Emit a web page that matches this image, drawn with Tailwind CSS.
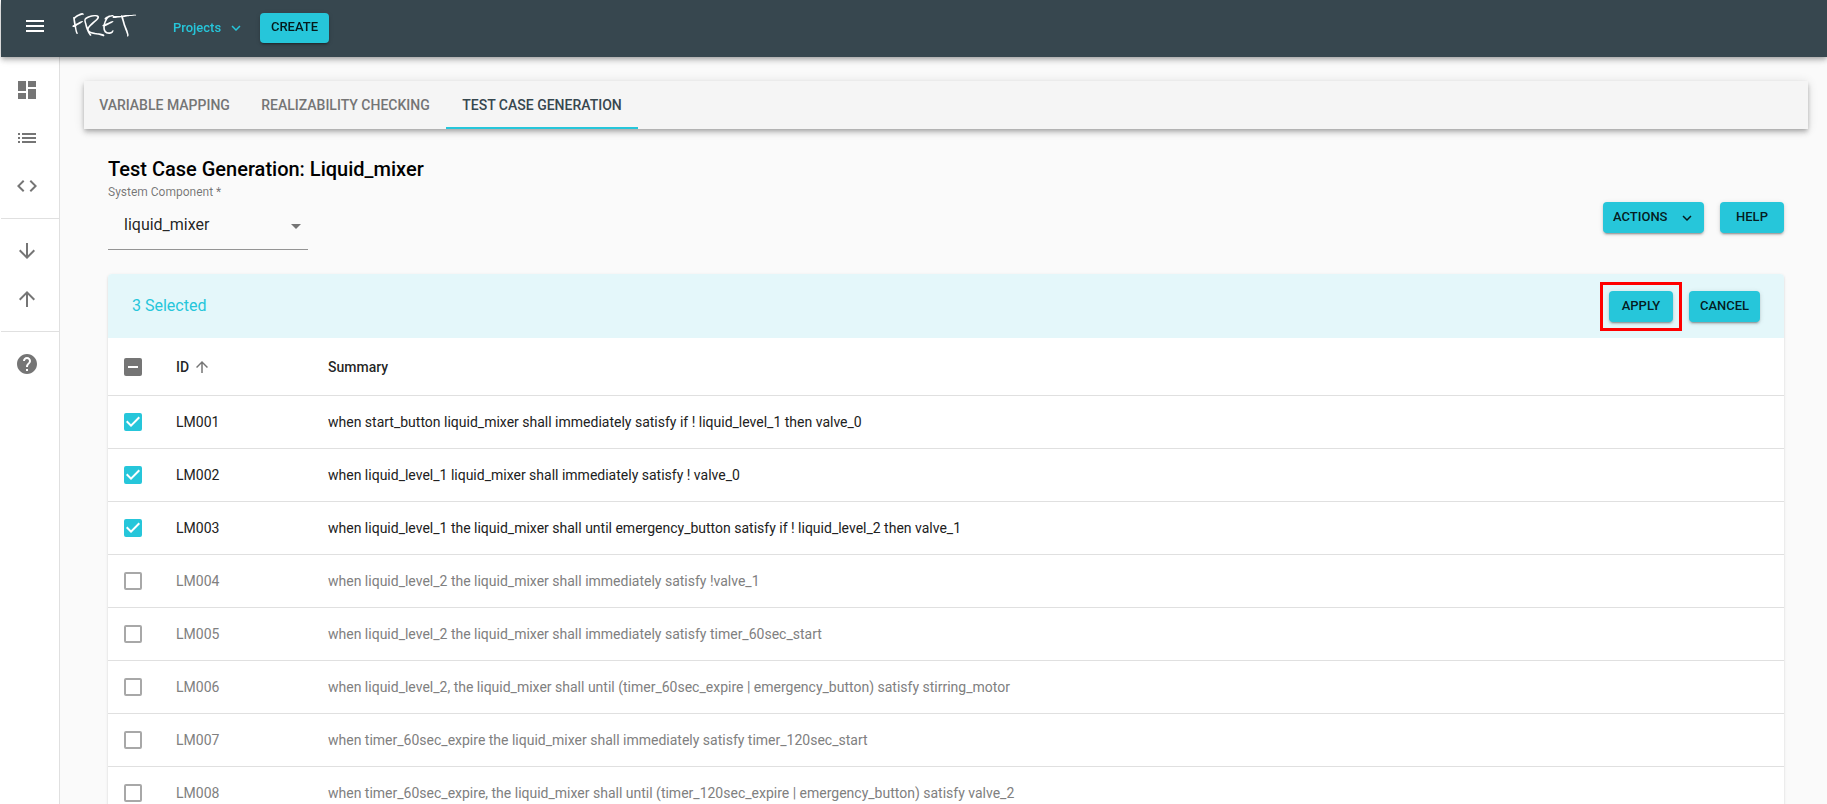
<!DOCTYPE html>
<html lang="en">
<head>
<meta charset="utf-8">
<meta name="viewport" content="width=device-width, initial-scale=1">
<title>FRET - Test Case Generation</title>
<script src="https://cdn.jsdelivr.net/npm/@tailwindcss/browser@4"></script>
</head>
<body class="bg-white font-['Roboto',sans-serif] text-sm text-black/87">
<div class="flex h-screen flex-col pl-px">

  <header class="z-10 flex h-[57px] shrink-0 items-center bg-[#37474f] pb-[2px] pl-[22px] shadow-[0_2px_4px_-1px_rgba(0,0,0,0.2),0_4px_5px_0_rgba(0,0,0,0.14),0_1px_10px_0_rgba(0,0,0,0.12)]">
    <button type="button" aria-label="Menu" class="mb-1 text-white">
      <svg class="size-6" viewBox="0 0 24 24" fill="currentColor"><path d="M3 18h18v-2H3v2zm0-5h18v-2H3v2zm0-7v2h18V6H3z"/></svg>
    </button>
    <a href="#" class="ml-6 w-[78px] pb-[6px] font-['Reenie_Beanie','Lato',cursive] text-[36px] leading-8 font-bold text-white">FRET</a>
    <button type="button" class="ml-6 flex items-center gap-[2px] pt-px text-[13px] font-medium text-[#26c6da]">
      <span class="min-w-[52px] text-left">Projects</span>
      <svg class="size-[18px]" viewBox="0 0 24 24" fill="currentColor"><path d="M16.59 8.59 12 13.17 7.41 8.59 6 10l6 6 6-6z"/></svg>
    </button>
    <button type="button" class="ml-[15px] h-[30px] min-w-[69px] rounded bg-[#26c6da] px-2 text-[13px] font-medium shadow-[0_3px_1px_-2px_rgba(0,0,0,0.2),0_2px_2px_0_rgba(0,0,0,0.14),0_1px_5px_0_rgba(0,0,0,0.12)]">CREATE</button>
  </header>

  <div class="flex min-h-0 flex-1">
    <nav aria-label="Main" class="w-[59px] shrink-0 border-r border-black/12 pt-[9px] text-[#757575]">
      <div class="pb-2">
        <a href="#" aria-label="Dashboard" class="flex h-12 items-center pl-[14px]"><svg class="size-6" viewBox="0 0 24 24" fill="currentColor"><path d="M3 13h8V3H3v10zm0 8h8v-6H3v6zm10 0h8V11h-8v10zm0-18v6h8V3h-8z"/></svg></a>
        <a href="#" aria-label="Requirements" class="flex h-12 items-center pl-[14px]"><svg class="size-6" viewBox="0 0 24 24" fill="currentColor"><path d="M3 13h2v-2H3v2zm0 4h2v-2H3v2zm0-8h2V7H3v2zm4 4h14v-2H7v2zm0 4h14v-2H7v2zM7 7v2h14V7H7z"/></svg></a>
        <a href="#" aria-label="Analysis" class="flex h-12 items-center pl-[14px]"><svg class="size-6" viewBox="0 0 24 24" fill="currentColor"><path d="M9.4 16.6 4.8 12l4.6-4.6L8 6l-6 6 6 6 1.4-1.4zm5.2 0 4.6-4.6-4.6-4.6L16 6l6 6-6 6-1.4-1.4z"/></svg></a>
      </div>
      <div class="border-t border-black/12 py-2">
        <a href="#" aria-label="Import" class="flex h-12 items-center pl-[14px]"><svg class="size-6" viewBox="0 0 24 24" fill="currentColor"><path d="m20 12-1.41-1.41L13 16.17V4h-2v12.17l-5.58-5.59L4 12l8 8 8-8z"/></svg></a>
        <a href="#" aria-label="Export" class="flex h-12 items-center pl-[14px]"><svg class="size-6" viewBox="0 0 24 24" fill="currentColor"><path d="m4 12 1.41 1.41L11 7.83V20h2V7.83l5.58 5.59L20 12l-8-8-8 8z"/></svg></a>
      </div>
      <div class="border-t border-black/12 py-2">
        <a href="#" aria-label="Help" class="flex h-12 items-center pl-[14px]"><svg class="size-6" viewBox="0 0 24 24" fill="currentColor"><path d="M12 2C6.48 2 2 6.48 2 12s4.48 10 10 10 10-4.48 10-10S17.52 2 12 2zm1 17h-2v-2h2v2zm2.07-7.75-.9.92C13.45 12.9 13 13.5 13 15h-2v-.5c0-1.1.45-2.1 1.17-2.83l1.24-1.26c.37-.36.59-.86.59-1.41 0-1.1-.9-2-2-2s-2 .9-2 2H8c0-2.21 1.79-4 4-4s4 1.79 4 4c0 .88-.36 1.68-.93 2.25z"/></svg></a>
      </div>
    </nav>

    <main class="min-w-0 flex-1 overflow-y-auto bg-[#fafafa] pt-6 pr-[19px] pl-6 [scrollbar-width:none]">
      <div role="tablist" class="flex h-12 bg-[#f5f5f5] font-medium text-[#757575] shadow-[0_2px_4px_-1px_rgba(0,0,0,0.2),0_4px_5px_0_rgba(0,0,0,0.14),0_1px_10px_0_rgba(0,0,0,0.12)]">
        <button type="button" role="tab" aria-selected="false" class="min-w-[161px] px-3">VARIABLE MAPPING</button>
        <button type="button" role="tab" aria-selected="false" class="min-w-[201px] px-3">REALIZABILITY CHECKING</button>
        <button type="button" role="tab" aria-selected="true" class="min-w-[192px] border-b-2 border-[#26c6da] px-3 pt-[2px] text-[#37474f]">TEST CASE GENERATION</button>
      </div>

      <div class="px-6 pt-6">
        <h1 class="text-xl leading-8 font-medium text-black">Test Case Generation: Liquid_mixer</h1>
        <div class="flex items-center justify-between">
          <div class="w-[200px]">
            <label for="component" class="block text-xs leading-[14px] text-black/54">System Component *</label>
            <div class="grid items-center border-b border-[#949494]">
              <select id="component" class="h-[50px] w-full appearance-none pt-[2px] pl-4 text-base [grid-area:1/1]"><option>liquid_mixer</option></select>
              <svg class="pointer-events-none mt-[3px] size-6 justify-self-end text-[#757575] [grid-area:1/1]" viewBox="0 0 24 24" fill="currentColor"><path d="m7 10 5 5 5-5z"/></svg>
            </div>
          </div>
          <div class="flex gap-4 text-[13px] font-medium">
            <button type="button" class="flex h-[31px] min-w-[101px] items-center justify-between rounded bg-[#26c6da] pr-2 pl-[10px] shadow-[0_3px_1px_-2px_rgba(0,0,0,0.2),0_2px_2px_0_rgba(0,0,0,0.14),0_1px_5px_0_rgba(0,0,0,0.12)]">ACTIONS
              <svg class="size-[18px]" viewBox="0 0 24 24" fill="currentColor"><path d="M16.59 8.59 12 13.17 7.41 8.59 6 10l6 6 6-6z"/></svg>
            </button>
            <button type="button" class="h-[31px] min-w-16 rounded bg-[#26c6da] px-[10px] shadow-[0_3px_1px_-2px_rgba(0,0,0,0.2),0_2px_2px_0_rgba(0,0,0,0.14),0_1px_5px_0_rgba(0,0,0,0.12)]">HELP</button>
          </div>
        </div>

        <section class="mt-6 rounded bg-white shadow-[0_2px_1px_-1px_rgba(0,0,0,0.2),0_1px_1px_0_rgba(0,0,0,0.14),0_1px_3px_0_rgba(0,0,0,0.12)]">
          <div class="flex h-16 items-center justify-between rounded-t bg-[#e4f7fa] pr-6 pl-6">
            <p class="text-base text-[#26c6da]">3 Selected</p>
            <div class="flex items-center gap-[7px] text-[13px] font-medium">
              <div class="border-3 border-[#ff0000] p-[6px]">
                <button type="button" class="block h-[31px] min-w-16 rounded bg-[#26c6da] px-[10px] shadow-[0_3px_1px_-2px_rgba(0,0,0,0.2),0_2px_2px_0_rgba(0,0,0,0.14),0_1px_5px_0_rgba(0,0,0,0.12)]">APPLY</button>
              </div>
              <button type="button" class="h-[31px] min-w-[71px] rounded bg-[#26c6da] px-2 shadow-[0_3px_1px_-2px_rgba(0,0,0,0.2),0_2px_2px_0_rgba(0,0,0,0.14),0_1px_5px_0_rgba(0,0,0,0.12)]">CANCEL</button>
            </div>
          </div>

          <table class="w-full table-fixed border-separate border-spacing-0 text-left">
            <thead>
              <tr class="h-[58px] *:border-b *:border-[#e0e0e0] *:font-medium">
                <th class="w-[52px] pl-4">
                  <span class="grid size-[18px] place-items-center">
                    <input type="checkbox" aria-label="Select all" class="size-[18px] appearance-none rounded-[2px] bg-[#757575] [grid-area:1/1]">
                    <svg class="pointer-events-none size-[18px] [grid-area:1/1]" viewBox="3 3 18 18" fill="#fff"><path d="M7 11h10v2H7z"/></svg>
                  </span>
                </th>
                <th class="w-[152px] pl-4" aria-sort="ascending">
                  <button type="button" class="flex items-center gap-1">ID
                    <svg class="size-[18px] text-[#757575]" viewBox="0 0 24 24" fill="currentColor"><path d="m4 12 1.41 1.41L11 7.83V20h2V7.83l5.58 5.59L20 12l-8-8-8 8z"/></svg>
                  </button>
                </th>
                <th class="pl-4">Summary</th>
              </tr>
            </thead>
            <tbody id="requirements"></tbody>
          </table>
        </section>
      </div>
    </main>
  </div>
</div>

<template id="row-template">
  <tr class="group h-[53px] text-[#808080] has-checked:text-[#212121] *:border-b *:border-[#e0e0e0]">
    <td class="pl-4">
      <span class="grid size-[18px] place-items-center">
        <input type="checkbox" class="size-[18px] appearance-none rounded-[2px] border-2 border-[#a8a8a8] checked:border-[#26c6da] checked:bg-[#26c6da] [grid-area:1/1]">
        <svg class="pointer-events-none hidden size-[18px] group-has-checked:block [grid-area:1/1]" viewBox="3 3 18 18" fill="#fff"><path d="m10 17-5-5 1.41-1.41L10 14.17l7.59-7.59L19 8l-9 9z"/></svg>
      </span>
    </td>
    <td class="pl-4"><label></label></td>
    <td class="pl-4"></td>
  </tr>
</template>
<script>
  const requirements = [
    ['LM001', 'when start_button liquid_mixer shall immediately satisfy if ! liquid_level_1 then valve_0', true],
    ['LM002', 'when liquid_level_1 liquid_mixer shall immediately satisfy ! valve_0', true],
    ['LM003', 'when liquid_level_1 the liquid_mixer shall until emergency_button satisfy if ! liquid_level_2 then valve_1', true],
    ['LM004', 'when liquid_level_2 the liquid_mixer shall immediately satisfy !valve_1', false],
    ['LM005', 'when liquid_level_2 the liquid_mixer shall immediately satisfy timer_60sec_start', false],
    ['LM006', 'when liquid_level_2, the liquid_mixer shall until (timer_60sec_expire | emergency_button) satisfy stirring_motor', false],
    ['LM007', 'when timer_60sec_expire the liquid_mixer shall immediately satisfy timer_120sec_start', false],
    ['LM008', 'when timer_60sec_expire, the liquid_mixer shall until (timer_120sec_expire | emergency_button) satisfy valve_2', false],
  ];
  const template = document.getElementById('row-template');
  const body = document.getElementById('requirements');
  for (const [id, summary, selected] of requirements) {
    const row = template.content.cloneNode(true);
    const box = row.querySelector('input');
    const label = row.querySelector('label');
    box.id = id;
    box.checked = selected;
    label.htmlFor = id;
    label.textContent = id;
    row.querySelector('td:last-child').textContent = summary;
    body.append(row);
  }
</script>
</body>
</html>
